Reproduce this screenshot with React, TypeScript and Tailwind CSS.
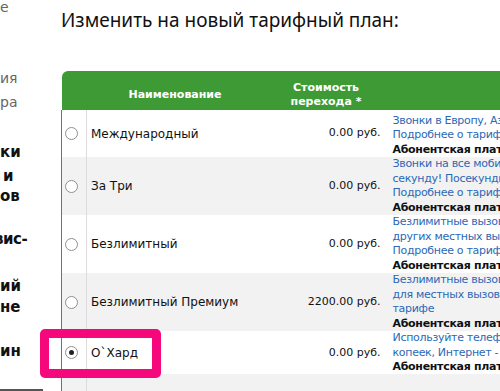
const plans = [
  {
    name: "Международный",
    cost: "0.00 руб.",
    h: "h-[47px]",
    pad: "pt-[4px]",
    gray: false,
    checked: false,
    lines: [
      { t: "Звонки в Европу, Азию, Америку по выгодным ценам", link: true },
      { t: "Подробнее о тарифе", link: true },
      { t: "Абонентская плата: 0 руб. в месяц", bold: true },
    ],
  },
  {
    name: "За Три",
    cost: "0.00 руб.",
    h: "h-[58px]",
    pad: "",
    gray: true,
    checked: false,
    lines: [
      { t: "Звонки на все мобильные и городские номера по 3 коп. за", link: true },
      { t: "секунду! Посекундная тарификация с первой секунды", link: true },
      { t: "Подробнее о тарифе", link: true },
      { t: "Абонентская плата: 0 руб. в месяц", bold: true },
    ],
  },
  {
    name: "Безлимитный",
    cost: "0.00 руб.",
    h: "h-[58px]",
    pad: "",
    gray: false,
    checked: false,
    lines: [
      { t: "Безлимитные вызовы внутри сети, а также для", link: true },
      { t: "других местных вызовов по выгодной цене", link: true },
      { t: "Подробнее о тарифе", link: true },
      { t: "Абонентская плата: 700 руб. в месяц", bold: true },
    ],
  },
  {
    name: "Безлимитный Премиум",
    cost: "2200.00 руб.",
    h: "h-[58px]",
    pad: "",
    gray: true,
    checked: false,
    lines: [
      { t: "Безлимитные вызовы внутри сети, а также", link: true },
      { t: "для местных вызовов на городские. Подробнее о", link: true },
      { t: "тарифе", link: true },
      { t: "Абонентская плата: 1500 руб. в месяц", bold: true },
    ],
  },
  {
    name: "О`Хард",
    cost: "0.00 руб.",
    h: "h-[42px]",
    pad: "",
    gray: false,
    checked: true,
    lines: [
      { t: "Используйте телефон без абонентской платы за 0", link: true },
      { t: "копеек, Интернет - по 1.5 руб. за мегабайт", link: true },
      { t: "Абонентская плата: 0 руб. в месяц", bold: true },
    ],
  },
  {
    name: "Любимый город",
    cost: "0.00 руб.",
    h: "h-[58px]",
    pad: "",
    gray: true,
    checked: false,
    lines: [
      { t: "Часто звоните в другие города? Этот тариф для вас", link: true },
      { t: "Подробнее о тарифе", link: true },
    ],
  },
];

function Radio({ checked }: { checked: boolean }) {
  return (
    <span className="flex h-[13px] w-[13px] items-center justify-center rounded-full border border-[#8f8f8f] bg-white">
      {checked && <span className="h-[5px] w-[5px] rounded-full bg-[#222]" />}
    </span>
  );
}

export default function App() {
  return (
    <div className="relative flex h-[391px] w-[500px] overflow-hidden bg-white font-['DejaVu_Sans',sans-serif] text-[#111]">
      {/* обрезанная левая колонка */}
      <aside className="w-[61px] shrink-0 overflow-hidden leading-none">
        <div className="h-[14px] text-[14px] text-[#666]">е</div>
        <div className="mt-[57px] h-[14px] text-[14px] text-[#666]">ия</div>
        <div className="mt-[10px] h-[14px] text-[14px] text-[#666]">ра</div>
        <div className="mt-[36px] h-[15px] text-[15px] font-bold">ки</div>
        <div className="mt-[9px] h-[15px] pl-[3px] text-[15px] font-bold">и</div>
        <div className="mt-[5px] h-[15px] text-[15px] font-bold">ов</div>
        <div className="mt-[28px] -ml-[6px] h-[15px] text-[15px] font-bold tracking-[-0.5px]">вис-</div>
        <div className="mt-[32px] h-[15px] text-[15px] font-bold">ий</div>
        <div className="mt-[6px] h-[15px] text-[15px] font-bold">не</div>
        <div className="mt-[29px] h-[15px] text-[15px] font-bold">ин</div>
        <div className="mt-[30px] h-[2px] w-[43px] bg-[#555]" />
      </aside>

      <main className="w-[640px] shrink-0">
        <h1 className="mt-[11px] h-[19px] font-['Noto_Sans',sans-serif] text-[19px] leading-none text-[#111]">
          Изменить на новый тарифный план:
        </h1>

        <table className="mt-[41px] w-[640px] table-fixed border-collapse text-[11px]">
          <colgroup>
            <col className="w-[25px]" />
            <col className="w-[177px]" />
            <col className="w-[125px]" />
            <col />
          </colgroup>
          <thead>
            <tr className="h-[39px] bg-[#3d9a35] text-[11px] font-bold leading-[14px] text-white">
              <th className="rounded-tl-[6px]" />
              <th className="pt-[8px] text-center">Наименование</th>
              <th className="pt-[8px] text-center">
                Стоимость
                <br />
                перехода *
              </th>
              <th className="pt-[8px] text-center">Описание</th>
            </tr>
          </thead>
          <tbody>
            {plans.map((p) => (
              <tr key={p.name} className={`${p.h} ${p.gray ? "bg-[#f2f2f2]" : "bg-white"}`}>
                <td className="border-l border-r border-l-[#3d9a35] border-r-[#dcdcdc] pl-[3px] align-middle">
                  <Radio checked={p.checked} />
                </td>
                <td className="pl-[4px] align-middle text-[12px] whitespace-nowrap">{p.name}</td>
                <td className="pr-[8px] text-right align-middle whitespace-nowrap">{p.cost}</td>
                <td className={`pl-[4px] align-middle text-[11px] leading-[14.4px] tracking-[-0.3px] whitespace-nowrap ${p.pad}`}>
                  {p.lines.map((l) => (
                    <div
                      key={l.t}
                      className={l.bold ? "font-bold text-[#111]" : "text-[#2a68b6]"}
                    >
                      {l.t}
                    </div>
                  ))}
                </td>
              </tr>
            ))}
          </tbody>
        </table>
      </main>

      {/* выделение выбранного тарифа */}
      <div className="absolute left-[40px] top-[329px] h-[49px] w-[121px] rounded-[5px] border-[9px] border-[#f6087d]" />
    </div>
  );
}
